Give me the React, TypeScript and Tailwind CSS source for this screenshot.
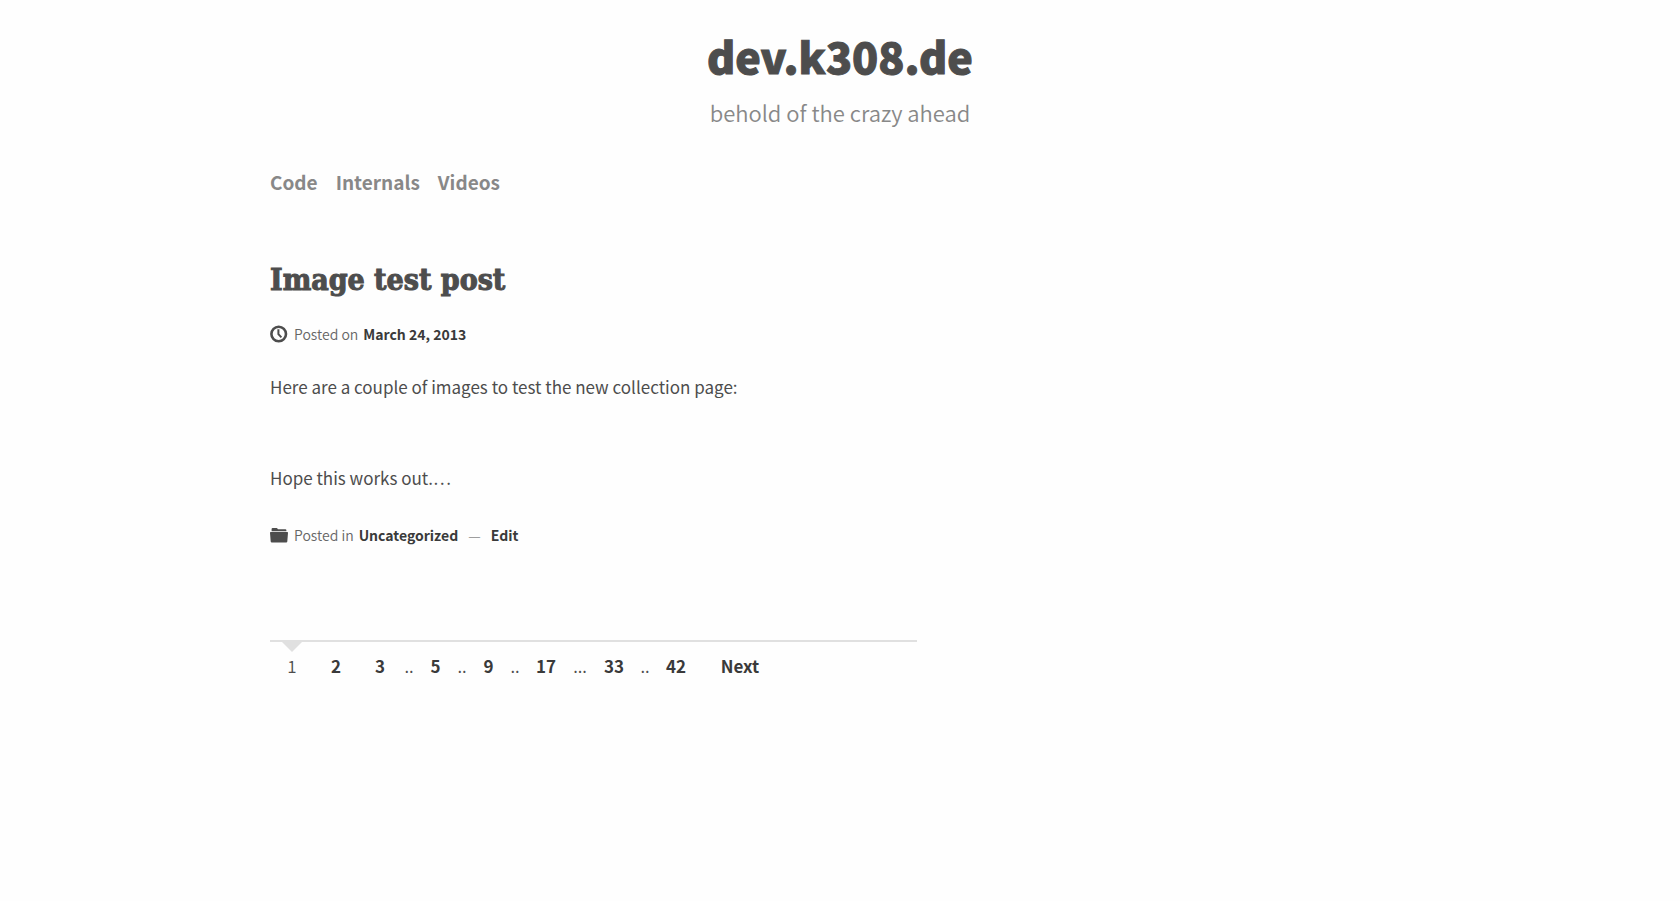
import React from "react";

type PageItem = { label: string; kind: "current" | "page" | "gap" | "next"; width: string };

const navigation = ["Code", "Internals", "Videos"];

const pages: PageItem[] = [
  { label: "1", kind: "current", width: "w-11" },
  { label: "2", kind: "page", width: "w-11" },
  { label: "3", kind: "page", width: "w-11" },
  { label: "..", kind: "gap", width: "w-[14px]" },
  { label: "5", kind: "page", width: "w-[39px]" },
  { label: "..", kind: "gap", width: "w-[14px]" },
  { label: "9", kind: "page", width: "w-[39px]" },
  { label: "..", kind: "gap", width: "w-[14px]" },
  { label: "17", kind: "page", width: "w-12" },
  { label: "...", kind: "gap", width: "w-5" },
  { label: "33", kind: "page", width: "w-12" },
  { label: "..", kind: "gap", width: "w-[14px]" },
  { label: "42", kind: "page", width: "w-12" },
  { label: "Next", kind: "next", width: "w-20" },
];

function ClockIcon() {
  return (
    <svg className="h-[18px] w-[18px] shrink-0" viewBox="0 0 18 18" fill="none" stroke="#4d4d4d" aria-hidden="true">
      <circle cx="8.7" cy="9" r="7.3" strokeWidth="2.6" />
      <path d="M8.4 4.2V9.2L11.4 12.4" strokeWidth="2" />
    </svg>
  );
}

function FolderIcon() {
  return (
    <svg className="h-[18px] w-[18px] shrink-0" viewBox="0 0 18 18" fill="#4d4d4d" aria-hidden="true">
      <path d="M1.6 5.2V3Q1.6 2 2.6 2H6.6Q7.3 2 7.6 2.7L7.9 3.2H15.4Q16.4 3.2 16.4 4.2V5.2Z" />
      <path d="M0.6 6H17.4Q18.1 6 18 6.8L17.3 15.4Q17.2 16.4 16.2 16.4H1.8Q0.8 16.4 0.7 15.4L0 6.8Q-0.1 6 0.6 6Z" />
    </svg>
  );
}

export default function App() {
  return (
    <div className="min-h-screen bg-[#fefefe] px-6 pt-7 font-['Noto_Sans_CJK_SC',sans-serif] text-[#4d4d4d]">
      <div className="mx-auto max-w-[1140px]">
        <header>
          <div className="text-center">
            <p className="text-[43px] leading-[54px] font-black [-webkit-text-stroke:1px_#4d4d4d]">
              <a href="#home">dev.k308.de</a>
            </p>
            <p className="mt-[14px] text-[22px] leading-8 font-[350] text-[#888]">behold of the crazy ahead</p>
          </div>
          <nav className="mt-10 flex gap-[18px] text-[19px] leading-7 font-bold text-[#888]" aria-label="Main">
            {navigation.map((item) => (
              <a key={item} href={`#${item.toLowerCase()}`}>{item}</a>
            ))}
          </nav>
        </header>

        <main className="mt-16 max-w-[647px]">
          <article>
            <h1 className="font-['DejaVu_Serif_Condensed','DejaVu_Serif',serif] text-[30px] leading-10 font-bold [-webkit-text-stroke:1px_#4d4d4d]">
              <a href="#post">Image test post</a>
            </h1>
            <p className="mt-[22px] flex items-center gap-[6px] text-sm leading-6 font-[350] text-[#666]">
              <ClockIcon />
              <span className="flex gap-[5px]">
                <span>Posted on</span>
                <a href="#date" className="font-bold text-[#3a3a3a]">March 24, 2013</a>
              </span>
            </p>
            <div className="mt-[27px] text-[17px] leading-7">
              <p>Here are a couple of images to test the new collection page:</p>
              <p className="mt-[63px]">Hope this works out.…</p>
            </div>
            <p className="mt-[31px] flex items-center gap-[6px] text-sm leading-6 font-[350] text-[#666]">
              <FolderIcon />
              <span className="flex gap-[5px]">
                <span>Posted in</span>
                <a href="#uncategorized" className="font-bold text-[#3a3a3a]">Uncategorized</a>
              </span>
              <span className="mx-1 text-[#888]">—</span>
              <a href="#edit" className="font-bold text-[#3a3a3a]">Edit</a>
            </p>
          </article>

          <nav className="mt-[93px] border-t-2 border-[#e0e0e0]" aria-label="Pages">
            <ul className="flex text-center text-[17px] leading-7">
              {pages.map((page, index) => (
                <li key={index} className={`relative pt-[10px] ${page.width}`}>
                  {page.kind === "current" && (
                    <>
                      <svg className="absolute top-0 left-3 h-[10px] w-5" viewBox="0 0 20 10" fill="#e0e0e0" aria-hidden="true">
                        <path d="M0 0H20L10 10Z" />
                      </svg>
                      <span className="font-[350]" aria-current="page">{page.label}</span>
                    </>
                  )}
                  {page.kind === "gap" && <span className="font-[350]">{page.label}</span>}
                  {page.kind === "page" && <a href={`#page-${page.label}`} className="font-bold text-[#3a3a3a]">{page.label}</a>}
                  {page.kind === "next" && <a href="#page-2" className="font-bold text-[#3a3a3a]">{page.label}</a>}
                </li>
              ))}
            </ul>
          </nav>
        </main>
      </div>
    </div>
  );
}
